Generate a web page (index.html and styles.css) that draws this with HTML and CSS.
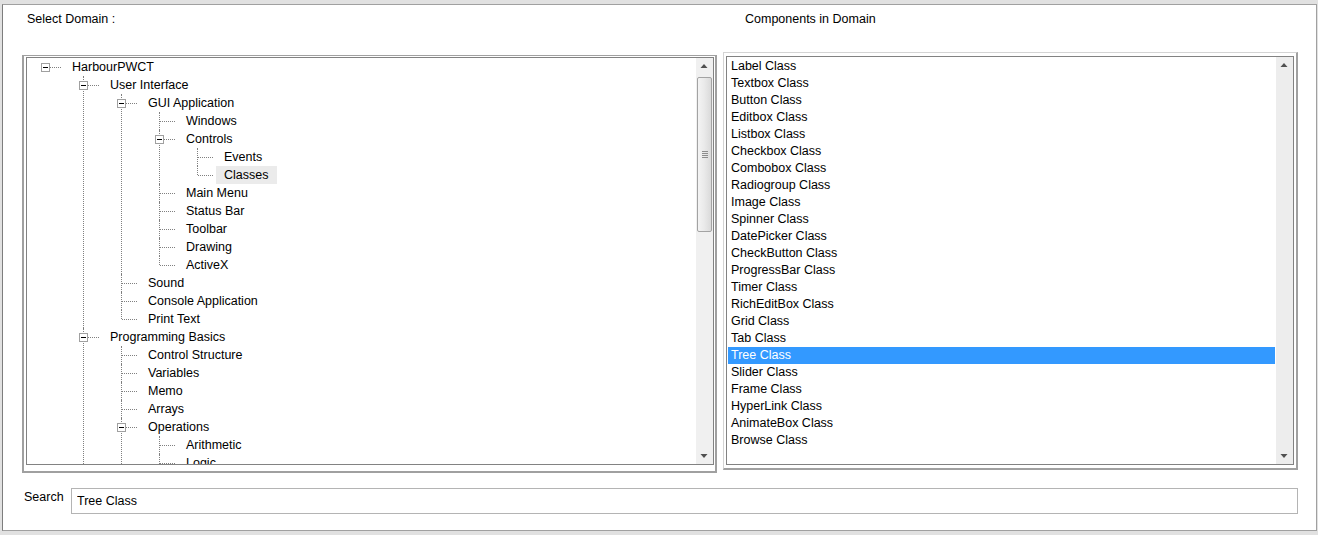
FILE: index.html
```html
<!DOCTYPE html>
<html>
<head>
<meta charset="utf-8">
<title>Domain Components</title>
<link rel="stylesheet" href="styles.css">
</head>
<body>
<div class="window">
  <div class="main">
    <div class="caption caption-left">Select Domain :</div>
    <div class="caption caption-right">Components in Domain</div>

    <div class="tree-panel">
      <div class="tree-client">
        <div class="tree-view">
          <ul class="tree">
            <li class="root">
              <div class="row"><span class="btn"></span><span class="label">HarbourPWCT</span></div>
              <ul>
                <li>
                  <div class="row"><span class="btn"></span><span class="label">User Interface</span></div>
                  <ul>
                    <li>
                      <div class="row"><span class="btn"></span><span class="label">GUI Application</span></div>
                      <ul>
                        <li><div class="row"><span class="label">Windows</span></div></li>
                        <li>
                          <div class="row"><span class="btn"></span><span class="label">Controls</span></div>
                          <ul>
                            <li><div class="row"><span class="label">Events</span></div></li>
                            <li><div class="row"><span class="label selected">Classes</span></div></li>
                          </ul>
                        </li>
                        <li><div class="row"><span class="label">Main Menu</span></div></li>
                        <li><div class="row"><span class="label">Status Bar</span></div></li>
                        <li><div class="row"><span class="label">Toolbar</span></div></li>
                        <li><div class="row"><span class="label">Drawing</span></div></li>
                        <li><div class="row"><span class="label">ActiveX</span></div></li>
                      </ul>
                    </li>
                    <li><div class="row"><span class="label">Sound</span></div></li>
                    <li><div class="row"><span class="label">Console Application</span></div></li>
                    <li><div class="row"><span class="label">Print Text</span></div></li>
                  </ul>
                </li>
                <li class="cont">
                  <div class="row"><span class="btn"></span><span class="label">Programming Basics</span></div>
                  <ul>
                    <li><div class="row"><span class="label">Control Structure</span></div></li>
                    <li><div class="row"><span class="label">Variables</span></div></li>
                    <li><div class="row"><span class="label">Memo</span></div></li>
                    <li><div class="row"><span class="label">Arrays</span></div></li>
                    <li class="cont">
                      <div class="row"><span class="btn"></span><span class="label">Operations</span></div>
                      <ul>
                        <li><div class="row"><span class="label">Arithmetic</span></div></li>
                        <li class="cont"><div class="row"><span class="label">Logic</span></div></li>
                      </ul>
                    </li>
                  </ul>
                </li>
              </ul>
            </li>
          </ul>
        </div>
        <div class="vscroll">
          <div class="arrow"><svg width="17" height="17" viewBox="0 0 17 17"><polygon points="4.5,10 11.5,10 8,6" fill="#505050"/></svg></div>
          <div class="track">
            <div class="thumb"><span class="grip"></span></div>
          </div>
          <div class="arrow"><svg width="17" height="17" viewBox="0 0 17 17"><polygon points="4.5,7 11.5,7 8,11" fill="#505050"/></svg></div>
        </div>
      </div>
    </div>

    <div class="list-panel">
      <div class="list-client">
        <ul class="list">
          <li>Label Class</li>
          <li>Textbox Class</li>
          <li>Button Class</li>
          <li>Editbox Class</li>
          <li>Listbox Class</li>
          <li>Checkbox Class</li>
          <li>Combobox Class</li>
          <li>Radiogroup Class</li>
          <li>Image Class</li>
          <li>Spinner Class</li>
          <li>DatePicker Class</li>
          <li>CheckButton Class</li>
          <li>ProgressBar Class</li>
          <li>Timer Class</li>
          <li>RichEditBox Class</li>
          <li>Grid Class</li>
          <li>Tab Class</li>
          <li class="active">Tree Class</li>
          <li>Slider Class</li>
          <li>Frame Class</li>
          <li>HyperLink Class</li>
          <li>AnimateBox Class</li>
          <li>Browse Class</li>
        </ul>
        <div class="vscroll list-scroll">
          <div class="arrow"><svg width="17" height="17" viewBox="0 0 17 17"><polygon points="4.5,10 11.5,10 8,6" fill="#505050"/></svg></div>
          <div class="track"></div>
          <div class="arrow"><svg width="17" height="17" viewBox="0 0 17 17"><polygon points="4.5,7 11.5,7 8,11" fill="#505050"/></svg></div>
        </div>
      </div>
    </div>
  </div>

  <div class="search-row">
    <label class="search-label" for="search">Search</label>
    <input id="search" class="search-input" type="text" value="Tree Class">
  </div>
</div>
</body>
</html>
```

FILE: styles.css
```css
* { box-sizing: border-box; }

html, body {
  margin: 0;
  padding: 0;
}

body {
  background: #e1e1e1;
  font-family: "Liberation Sans", Arial, sans-serif;
  font-size: 12.5px;
  color: #000;
  width: 1318px;
  height: 535px;
  overflow: hidden;
  padding-top: 4px;
  padding-left: 2px;
}

.window {
  width: 1315px;
  height: 527px;
  background: #fff;
  border: 1px solid #a0a0a0;
  border-left-color: #7d7d7d;
}

.main {
  display: grid;
  grid-template-columns: 695px 575px;
  grid-template-rows: 47px 421px;
  column-gap: 6px;
  padding-left: 19px;
}

.caption {
  padding-top: 5px;
  line-height: 18px;
}
.caption-left { padding-left: 5px; }
.caption-right { padding-left: 22px; }

/* ---------- tree ---------- */
.tree-panel {
  margin-top: 3px;
  height: 418px;
  background: #fff;
  border-style: solid;
  border-color: #a0a0a0;
  border-width: 1px 2px 2px 2px;
  padding: 1px 1px 6px 2px;
}

.tree-client {
  height: 100%;
  border: 1px solid #828282;
  display: flex;
}

.tree-view {
  flex: 1;
  overflow: hidden;
  padding-left: 18px;
}

.tree, .tree ul {
  list-style: none;
  margin: 0;
  padding: 0;
}

.tree ul {
  margin-left: 38px;
}

.tree li {
  position: relative;
}

.tree li::before {
  content: "";
  position: absolute;
  left: 0;
  top: 0;
  bottom: 0;
  border-left: 1px dotted #808080;
}

.tree li:last-child:not(.cont)::before {
  bottom: auto;
  height: 9px;
}

.tree li.root::before {
  display: none;
}

.row {
  position: relative;
  height: 18px;
  display: flex;
  align-items: center;
  padding-left: 19px;
  white-space: nowrap;
}

.row::before {
  content: "";
  position: absolute;
  left: 1px;
  top: 9px;
  width: 15px;
  border-top: 1px dotted #808080;
}

.btn {
  position: absolute;
  left: -4px;
  top: 5px;
  width: 9px;
  height: 9px;
  border: 1px solid #a0a0a0;
  background: #fff;
  z-index: 1;
}

.btn::after {
  content: "";
  position: absolute;
  left: 1px;
  top: 3px;
  width: 5px;
  height: 1px;
  background: #000;
}

.label {
  line-height: 18px;
  padding: 0 9px 0 8px;
}

.label.selected {
  background: #ebebeb;
}

/* ---------- scrollbars ---------- */
.vscroll {
  width: 17px;
  display: flex;
  flex-direction: column;
  background: #f0f0f0;
}

.arrow {
  height: 17px;
  flex: none;
}

.arrow svg { display: block; }

.track {
  flex: 1;
  padding: 1px 1px 0 1px;
}

.thumb {
  height: 155px;
  margin-top: 1px;
  border: 1px solid #a3a3a3;
  border-radius: 2px;
  background: linear-gradient(90deg, #f4f4f4 0%, #e9e9e9 50%, #dadada 100%);
  display: flex;
  align-items: center;
  justify-content: center;
}

.grip {
  width: 6px;
  height: 7px;
  background: repeating-linear-gradient(180deg, #8c8c8c 0 1px, transparent 1px 2px);
}

/* ---------- list ---------- */
.list-panel {
  height: 418px;
  background: #fff;
  border-style: solid;
  border-width: 1px 2px 2px 1px;
  border-color: #d4d4d4 #a0a0a0 #a0a0a0 #d4d4d4;
  padding: 3px 2px 3px 2px;
}

.list-client {
  height: 100%;
  border: 1px solid #828282;
  display: flex;
}

.list {
  flex: 1;
  list-style: none;
  margin: 0;
  padding: 1px 1px 0 1px;
  overflow: hidden;
}

.list li {
  height: 17px;
  line-height: 17px;
  padding-left: 3px;
  white-space: nowrap;
}

.list li.active {
  background: #3399ff;
  color: #fff;
}

.list-scroll {
  background: #ededed;
}

/* ---------- search ---------- */
.search-row {
  display: flex;
  align-items: flex-start;
  margin-top: 15px;
  padding-left: 21px;
}

.search-label {
  width: 47px;
  line-height: 17px;
  padding-top: 1px;
}

.search-input {
  width: 1227px;
  height: 26px;
  margin: 0;
  border: 1px solid #b4b4b4;
  padding: 0 0 0 5px;
  font-family: "Liberation Sans", Arial, sans-serif;
  font-size: 12.5px;
  color: #000;
  background: #fff;
  outline: none;
}
```
